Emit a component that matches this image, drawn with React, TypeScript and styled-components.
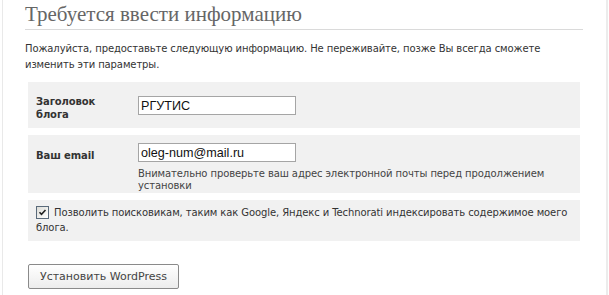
import React, { useEffect, useRef } from "react";
import styled, { createGlobalStyle } from "styled-components";

const Global = createGlobalStyle`
  html, body { margin: 0; padding: 0; background: #fff; }
  body {
    font-family: "DejaVu Sans", Verdana, sans-serif;
    font-size: 10px;
    letter-spacing: -0.1px;
    color: #333;
  }
`;

const Page = styled.div`
  margin: 0 1px 0 2px;
  height: 295px;
  box-sizing: border-box;
  border-left: 1px solid #e9e9e9;
  border-right: 2px solid #ececec;
  padding: 0 23px 0 22px;
`;

const Heading = styled.h1`
  margin: 0;
  padding: 2px 0 0;
  height: 27px;
  font-family: "Liberation Serif", "Times New Roman", serif;
  font-weight: normal;
  font-size: 21px;
  letter-spacing: 0;
  line-height: 25px;
  color: #666;
  border-bottom: 1px solid #dadada;
`;

const Intro = styled.p`
  margin: 11px 0 0;
  line-height: 16px;
  color: #333;
`;

const Form = styled.form`
  margin: 9px 3px 0 3px;
  display: flex;
  flex-direction: column;
  gap: 7px;
`;

const Row = styled.div<{ $pad: string }>`
  display: grid;
  grid-template-columns: 102px 1fr;
  align-items: start;
  background: #f1f1f1;
  padding: ${(p) => p.$pad};
`;

const Label = styled.label<{ $top?: number }>`
  font-weight: bold;
  line-height: 13px;
  width: 80px;
  color: #333;
  padding-top: ${(p) => p.$top || 0}px;
`;

const Field = styled.div`
  display: flex;
  flex-direction: column;
`;

const Input = styled.input<{ $shift?: number }>`
  box-sizing: border-box;
  width: 158px;
  height: 19px;
  margin: ${(p) => p.$shift || 0}px 0 0;
  padding: 0 2px;
  border: 1px solid #a5a5a5;
  background: #fff;
  font-family: "Liberation Sans", Arial, sans-serif;
  font-size: 12.6px;
  letter-spacing: 0;
  color: #111;
  caret-color: #000;
  outline: none;
`;

const Hint = styled.div`
  margin-top: 6px;
  line-height: 12px;
  color: #444;
`;

const CheckRow = styled.div`
  background: #f1f1f1;
  padding: 5px 8px 6px;
  line-height: 15px;
`;

const CheckLabel = styled.label`
  color: #333;
`;

const HiddenInput = styled.input`
  position: absolute;
  opacity: 0;
  width: 0;
  height: 0;
  margin: 0;
`;

const Box = styled.span`
  display: inline-block;
  box-sizing: border-box;
  width: 13px;
  height: 13px;
  border: 1px solid #5a6a7a;
  background: linear-gradient(135deg, #dcdcd7 0%, #fff 100%);
  vertical-align: -3px;
  margin: 0 5px 0 0;
  position: relative;
`;

const Submit = styled.button`
  margin: 16px 0 0 0;
  width: 151px;
  height: 25px;
  box-sizing: border-box;
  border: 1px solid #8a8a8a;
  border-radius: 2px;
  background: linear-gradient(#ffffff, #ececec);
  font-family: "DejaVu Sans", Verdana, sans-serif;
  font-size: 11px;
  letter-spacing: 0;
  color: #444;
  padding: 0;
`;

export default function App() {
  const emailRef = useRef<HTMLInputElement>(null);
  useEffect(() => {
    const el = emailRef.current;
    if (el) {
      el.focus();
      const n = el.value.length;
      el.setSelectionRange(n, n);
    }
  }, []);

  return (
    <>
      <Global />
      <Page>
        <Heading>Требуется ввести информацию</Heading>
        <Intro>
          Пожалуйста, предоставьте следующую информацию. Не переживайте, позже Вы всегда сможете изменить эти
          параметры.
        </Intro>
        <Form onSubmit={(e) => e.preventDefault()}>
          <Row $pad="13px 8px 7px">
            <Label htmlFor="blog_title">Заголовок блога</Label>
            <Input id="blog_title" defaultValue="РГУТИС" $shift={1} />
          </Row>
          <Row $pad="8px 8px 1px">
            <Label htmlFor="admin_email" $top={6}>
              Ваш email
            </Label>
            <Field>
              <Input id="admin_email" ref={emailRef} defaultValue="oleg-num@mail.ru" />
              <Hint>Внимательно проверьте ваш адрес электронной почты перед продолжением установки</Hint>
            </Field>
          </Row>
          <CheckRow>
            <CheckLabel>
              <HiddenInput type="checkbox" defaultChecked />
              <Box>
                <svg width="11" height="11" viewBox="0 0 11 11" style={{ position: "absolute", left: 0, top: 0 }}>
                  <path d="M2.5 5.2 L4.5 7.3 L8.5 3" fill="none" stroke="#222" strokeWidth="1.6" />
                </svg>
              </Box>
              Позволить поисковикам, таким как Google, Яндекс и Technorati индексировать содержимое моего блога.
            </CheckLabel>
          </CheckRow>
          <div>
            <Submit type="submit">Установить WordPress</Submit>
          </div>
        </Form>
      </Page>
    </>
  );
}
